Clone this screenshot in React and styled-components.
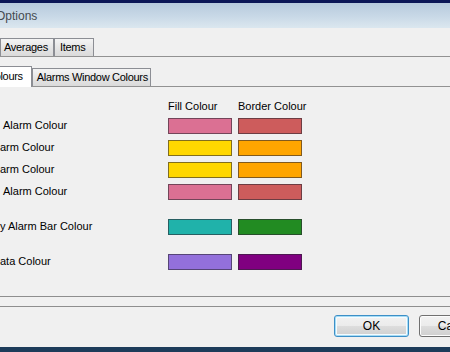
import React from "react";
import styled, { createGlobalStyle } from "styled-components";

const GlobalStyle = createGlobalStyle`
  html, body {
    margin: 0;
    padding: 0;
    background: #f0f0f0;
    overflow: hidden;
  }
  body {
    font-family: "Liberation Sans", Arial, sans-serif;
    font-size: 11px;
    color: #000;
  }
`;

const rows = [
  { label: "Alarm Colour", indent: 3, fill: "#db7093", border: "#cd5c5c", gap: 5 },
  { label: "arm Colour", indent: 0, fill: "#ffd700", border: "#ffa500", gap: 6 },
  { label: "arm Colour", indent: 0, fill: "#ffd700", border: "#ffa500", gap: 6 },
  { label: "Alarm Colour", indent: 3, fill: "#db7093", border: "#cd5c5c", gap: 6 },
  { label: "y Alarm Bar Colour", indent: 0, fill: "#20b2aa", border: "#228b22", gap: 19 },
  { label: "ata Colour", indent: 0, fill: "#9370db", border: "#800080", gap: 19 },
];

const App = () => {
  return (
    <>
      <GlobalStyle />
      <Window>
        <TopBand />
        <TitleBar>
          <Title>Options</Title>
        </TitleBar>
        <Body>
          <TabStrip>
            <Tab $w={54} $pad={3}>Averages</Tab>
            <Tab $w={40} $pad={5}>Items</Tab>
          </TabStrip>
          <OuterPage>
            <InnerStrip>
              <ActiveTab>Colours</ActiveTab>
              <Tab $w={119} $pad={4}>Alarms Window Colours</Tab>
            </InnerStrip>
            <ColourGrid>
              <HeaderRow>
                <Label />
                <HeaderCell>Fill Colour</HeaderCell>
                <HeaderCell>Border Colour</HeaderCell>
              </HeaderRow>
              {rows.map((r, i) => (
                <Row key={i} $gap={r.gap}>
                  <Label $indent={r.indent}>{r.label}</Label>
                  <Swatch $color={r.fill} />
                  <Swatch $color={r.border} />
                </Row>
              ))}
            </ColourGrid>
          </OuterPage>
          <Footer>
            <Button $default>OK</Button>
            <Button>Cancel</Button>
          </Footer>
        </Body>
        <BottomBand />
      </Window>
    </>
  );
};

export default App;

const Window = styled.div`
  width: 450px;
  height: 352px;
  display: flex;
  flex-direction: column;
  overflow: hidden;
`;

const TopBand = styled.div`
  height: 3px;
  background: #0b1757;
`;

const TitleBar = styled.div`
  height: 25px;
  display: flex;
  align-items: center;
  padding-top: 1px;
  box-sizing: border-box;
  background: linear-gradient(#b6cadd, #c9d9e7 55%, #dbe7ef);
  overflow: hidden;
`;

const Title = styled.span`
  margin-left: -4px;
  font-size: 12px;
  color: #454a50;
`;

const Body = styled.div`
  flex: 1;
  display: flex;
  flex-direction: column;
  padding-top: 10px;
  background: #f0f0f0;
`;

const TabStrip = styled.div`
  height: 19px;
  box-sizing: border-box;
  display: flex;
  align-items: flex-end;
  border-bottom: 1px solid #929292;
`;

const Tab = styled.div`
  width: ${(p) => p.$w}px;
  height: 18px;
  box-sizing: border-box;
  padding-left: ${(p) => p.$pad}px;
  border: 1px solid #8c8e94;
  border-bottom: none;
  background: linear-gradient(#f4f4f4, #e6e6e6 50%, #dadada);
  line-height: 17px;
  letter-spacing: -0.3px;
  white-space: nowrap;
  flex-shrink: 0;
`;

const OuterPage = styled.div`
  height: 240px;
  box-sizing: border-box;
  padding-top: 9px;
  border-bottom: 1px solid #8e8e8e;
`;

const InnerStrip = styled.div`
  height: 21px;
  box-sizing: border-box;
  display: flex;
  align-items: flex-end;
  border-bottom: 1px solid #929292;
`;

const ActiveTab = styled.div`
  height: 21px;
  margin-bottom: -1px;
  margin-left: -21px;
  box-sizing: border-box;
  padding: 0 8px 0 7px;
  border: 1px solid #8c8e94;
  border-bottom: none;
  background: #fff;
  line-height: 19px;
  letter-spacing: -0.3px;
  position: relative;
  z-index: 1;
`;

const ColourGrid = styled.div`
  margin-top: 13px;
  display: flex;
  flex-direction: column;
`;

const HeaderRow = styled.div`
  display: grid;
  grid-template-columns: 162px 64px 64px;
  column-gap: 6px;
  line-height: 13px;
`;

const HeaderCell = styled.div`
  white-space: nowrap;
`;

const Row = styled.div`
  display: grid;
  grid-template-columns: 162px 64px 64px;
  column-gap: 6px;
  height: 16px;
  margin-top: ${(p) => p.$gap}px;
  line-height: 15px;
`;

const Label = styled.div`
  padding-left: ${(p) => p.$indent || 0}px;
  white-space: nowrap;
`;

const Swatch = styled.div`
  height: 16px;
  box-sizing: border-box;
  background: ${(p) => p.$color};
  border: 1px solid rgba(45, 40, 50, 0.6);
`;

const Footer = styled.div`
  margin-top: 9px;
  height: 41px;
  box-sizing: border-box;
  border-top: 1px solid #8e8e8e;
  display: flex;
  gap: 10px;
  padding: 8px 0 0 334px;
`;

const Button = styled.div`
  width: 75px;
  height: 22px;
  flex-shrink: 0;
  box-sizing: border-box;
  border: 1px solid ${(p) => (p.$default ? "#3c8fc7" : "#707070")};
  border-radius: 3px;
  background: linear-gradient(#f2f2f2, #ebebeb 50%, #dddddd 51%, #cfcfcf);
  box-shadow: ${(p) =>
    p.$default ? "inset 0 0 0 1px #a6dcf5, inset 0 0 0 2px #f4fbff" : "inset 0 0 0 1px #fcfcfc"};
  text-align: center;
  line-height: 20px;
  font-size: 12px;
`;

const BottomBand = styled.div`
  height: 5px;
  background: #1d3c5a;
`;
